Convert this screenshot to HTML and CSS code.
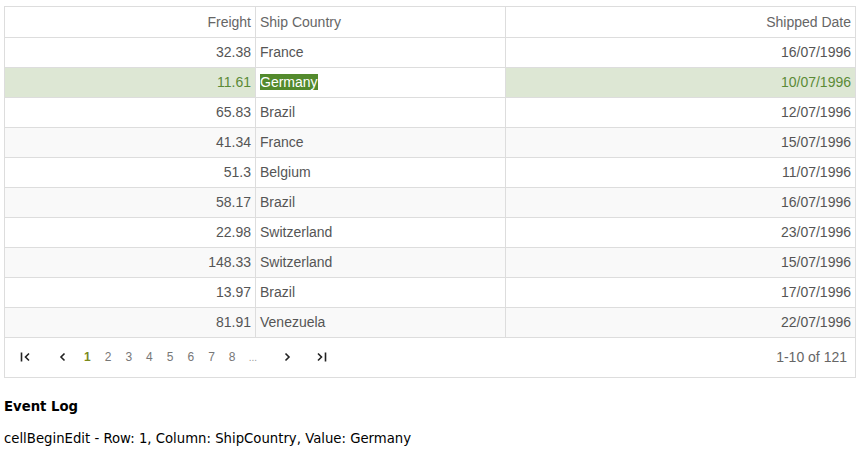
FILE: index.html
```html
<!DOCTYPE html>
<html>
<head>
<meta charset="utf-8">
<link rel="stylesheet" href="styles.css">
</head>
<body>
<div class="grid">
  <div class="row head">
    <div class="cell num">Freight</div>
    <div class="cell">Ship Country</div>
    <div class="cell num">Shipped Date</div>
  </div>
  <div class="row"><div class="cell num">32.38</div><div class="cell">France</div><div class="cell num">16/07/1996</div></div>
  <div class="row sel"><div class="cell num">11.61</div><div class="cell edit"><span class="hl">Germany</span></div><div class="cell num">10/07/1996</div></div>
  <div class="row"><div class="cell num">65.83</div><div class="cell">Brazil</div><div class="cell num">12/07/1996</div></div>
  <div class="row alt"><div class="cell num">41.34</div><div class="cell">France</div><div class="cell num">15/07/1996</div></div>
  <div class="row"><div class="cell num">51.3</div><div class="cell">Belgium</div><div class="cell num">11/07/1996</div></div>
  <div class="row alt"><div class="cell num">58.17</div><div class="cell">Brazil</div><div class="cell num">16/07/1996</div></div>
  <div class="row"><div class="cell num">22.98</div><div class="cell">Switzerland</div><div class="cell num">23/07/1996</div></div>
  <div class="row alt"><div class="cell num">148.33</div><div class="cell">Switzerland</div><div class="cell num">15/07/1996</div></div>
  <div class="row"><div class="cell num">13.97</div><div class="cell">Brazil</div><div class="cell num">17/07/1996</div></div>
  <div class="row alt last"><div class="cell num">81.91</div><div class="cell">Venezuela</div><div class="cell num">22/07/1996</div></div>
  <div class="pager">
    <div class="nav">
      <span class="btn first"><svg width="12" height="10" viewBox="0 0 12 10"><path d="M1.5 0.5v9" stroke="#222" stroke-width="1.6" fill="none"/><path d="M9 1.5L5.5 5 9 8.5" stroke="#222" stroke-width="1.6" fill="none"/></svg></span>
      <span class="btn prev"><svg width="8" height="10" viewBox="0 0 8 10"><path d="M5.5 1.5L2 5l3.5 3.5" stroke="#222" stroke-width="1.6" fill="none"/></svg></span>
      <span class="pages">
        <span class="pg active">1</span><span class="pg">2</span><span class="pg">3</span><span class="pg">4</span><span class="pg">5</span><span class="pg">6</span><span class="pg">7</span><span class="pg">8</span><span class="pg dots">...</span>
      </span>
      <span class="btn next"><svg width="8" height="10" viewBox="0 0 8 10"><path d="M2.5 1.5L6 5 2.5 8.5" stroke="#222" stroke-width="1.6" fill="none"/></svg></span>
      <span class="btn lastb"><svg width="12" height="10" viewBox="0 0 12 10"><path d="M3 1.5L6.5 5 3 8.5" stroke="#222" stroke-width="1.6" fill="none"/><path d="M10.5 0.5v9" stroke="#222" stroke-width="1.6" fill="none"/></svg></span>
    </div>
    <div class="info">1-10 of 121</div>
  </div>
</div>
<div class="log">
  <div class="log-title">Event Log</div>
  <div class="log-line">cellBeginEdit - Row: 1, Column: ShipCountry, Value: Germany</div>
</div>
</body>
</html>
```
FILE: styles.css
```css
html, body {
  margin: 0;
  padding: 0;
  background: #fff;
}
body {
  padding: 6px 0 0 4px;
}
.grid {
  width: 850px;
  border: 1px solid #dddddd;
  font-family: "Liberation Sans", Arial, sans-serif;
  font-size: 14px;
  color: #555;
}
.row {
  display: grid;
  grid-template-columns: 251px 250px 349px;
  height: 30px;
  box-sizing: border-box;
  border-bottom: 1px solid #dddddd;
}
.row.head {
  height: 31px;
  color: #666;
}
.row.alt {
  background: #f9f9f9;
}
.row.sel {
  background: #dde7d4;
  color: #5b8a37;
}
.cell {
  display: flex;
  align-items: center;
  padding: 0 4px 1px 4px;
  border-right: 1px solid #dddddd;
  box-sizing: border-box;
  white-space: nowrap;
}
.cell:last-child {
  border-right: none;
}
.cell.num {
  justify-content: flex-end;
}
.cell.edit {
  background: #fff;
}
.hl {
  background: #538a2d;
  color: #fff;
  line-height: 16px;
}
.pager {
  height: 39px;
  display: flex;
  align-items: center;
  justify-content: space-between;
  padding: 0 8px 1px 14px;
  box-sizing: border-box;
}
.nav {
  display: flex;
  align-items: center;
}
.btn {
  display: flex;
  align-items: center;
  justify-content: center;
  width: 14px;
  height: 20px;
}
.first { margin-right: 23px; }
.prev { margin-right: 7px; }
.next { margin-left: 17px; margin-right: 20px; }
.pages {
  display: flex;
  font-size: 12px;
  color: #777;
}
.pg {
  width: 20.7px;
  text-align: center;
}
.pg.active {
  color: #7a8a1e;
  font-weight: bold;
}
.pg.dots {
  font-size: 10px;
  color: #999;
  padding-top: 2px;
}
.info {
  color: #666;
}
.log {
  font-family: "DejaVu Sans", Verdana, sans-serif;
  font-size: 13.25px;
  color: #000;
  padding-top: 21px;
}
.log-title {
  font-weight: bold;
  height: 16px;
}
.log-line {
  margin-top: 16px;
}
```
